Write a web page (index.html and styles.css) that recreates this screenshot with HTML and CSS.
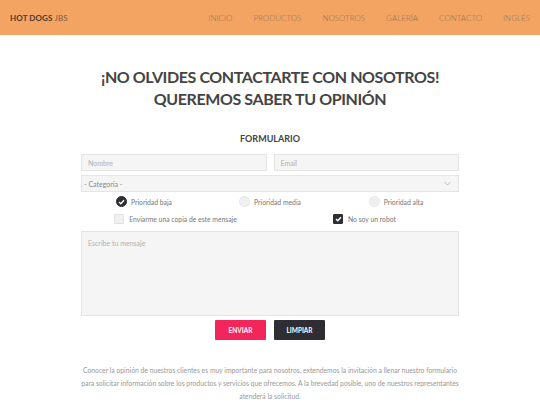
FILE: index.html
```html
<!DOCTYPE html>
<html lang="es">
<head>
<meta charset="utf-8">
<link rel="stylesheet" href="styles.css">
</head>
<body>
<header class="topbar">
  <div class="brand"><b>HOT DOGS</b> JBS</div>
  <nav class="nav">
    <a>INICIO</a><a>PRODUCTOS</a><a>NOSOTROS</a><a>GALERÍA</a><a>CONTACTO</a><a>INGLÉS</a>
  </nav>
</header>
<main class="main">
  <h1 class="title">¡NO OLVIDES CONTACTARTE CON NOSOTROS!<br>QUEREMOS SABER TU OPINIÓN</h1>
  <h2 class="subtitle">FORMULARIO</h2>
  <form class="form">
    <div class="row2">
      <div class="field">Nombre</div>
      <div class="field">Email</div>
    </div>
    <div class="field select">- Categoría -
      <svg class="chev" width="7" height="5" viewBox="0 0 7 5"><path d="M0.5 1 L3.5 4 L6.5 1" fill="none" stroke="#aaa" stroke-width="0.8"/></svg>
    </div>
    <div class="radios">
      <div class="opt"><span class="radio on"><svg width="7" height="6" viewBox="0 0 7 6"><path d="M1 3 L2.8 4.8 L6 1.2" fill="none" stroke="#fff" stroke-width="1.4"/></svg></span>Prioridad baja</div>
      <div class="opt"><span class="radio"></span>Prioridad media</div>
      <div class="opt"><span class="radio"></span>Prioridad alta</div>
    </div>
    <div class="checks">
      <div class="opt"><span class="check"></span>Enviarme una copia de este mensaje</div>
      <div class="opt"><span class="check on"><svg width="7" height="6" viewBox="0 0 7 6"><path d="M1 3 L2.8 4.8 L6 1.2" fill="none" stroke="#fff" stroke-width="1.4"/></svg></span>No soy un robot</div>
    </div>
    <div class="field area">Escribe tu mensaje</div>
    <div class="buttons">
      <span class="btn send">ENVIAR</span>
      <span class="btn clear">LIMPIAR</span>
    </div>
  </form>
  <p class="note">Conocer la opinión de nuestros clientes es muy importante para nosotros, extendemos la invitación a llenar nuestro formulario<br>para solicitar información sobre los productos y servicios que ofrecemos. A la brevedad posible, uno de nuestros representantes<br>atenderá la solicitud.</p>
</main>
</body>
</html>
```
FILE: styles.css
```css
* { box-sizing: border-box; }
body {
  margin: 0;
  font-family: "Lato", "Open Sans", sans-serif;
  color: #555;
  background: #fff;
}
.topbar {
  height: 35px;
  background: #f4a462;
  display: flex;
  align-items: center;
  justify-content: space-between;
  padding: 0 10px 0 10px;
}
.brand {
  font-size: 8px;
  color: #7a5a40;
  letter-spacing: 0.1px;
}
.brand b { color: #4a3a2e; font-weight: 700; }
.nav {
  display: flex;
  gap: 21px;
  font-size: 8px;
  font-weight: 300;
  color: #8f7056;
}
.main {
  width: 378px;
  margin: 0 auto;
  padding-top: 31px;
}
.title {
  margin: 0 -40px;
  text-align: center;
  white-space: nowrap;
  font-size: 16px;
  letter-spacing: -0.4px;
  line-height: 22px;
  font-weight: 700;
  color: #444;
}
.subtitle {
  margin: 23px 0 0;
  text-align: center;
  font-size: 9px;
  font-weight: 700;
  color: #444;
}
.form {
  margin-top: 10px;
  display: flex;
  flex-direction: column;
}
.row2 {
  display: grid;
  grid-template-columns: 1fr 1fr;
  gap: 7px;
}
.field {
  height: 17px;
  background: #f5f5f5;
  border: 1px solid #e4e4e4;
  font-size: 7px;
  color: #b0b0b0;
  display: flex;
  align-items: center;
  padding: 0 6px;
}
.select {
  margin-top: 4px;
  justify-content: space-between;
  color: #888;
  font-size: 7px;
  padding: 0 7px 0 2px;
}
.radios {
  display: grid;
  grid-template-columns: 1fr 1fr 1fr;
  height: 19px;
  align-items: center;
}
.checks {
  display: grid;
  grid-template-columns: 1fr 1fr;
  height: 16px;
  align-items: center;
}
.opt {
  display: flex;
  align-items: center;
  justify-content: center;
  font-size: 6.8px;
  color: #777;
}
.radio {
  width: 11px;
  height: 11px;
  border-radius: 50%;
  background: #f0f0f0;
  border: 1px solid #e6e6e6;
  margin-right: 4px;
  display: flex;
  align-items: center;
  justify-content: center;
}
.radio.on { background: #2d2d33; border-color: #2d2d33; }
.check {
  width: 10px;
  height: 10px;
  background: #f0f0f0;
  border: 1px solid #e2e2e2;
  border-radius: 1px;
  margin-right: 5px;
  display: flex;
  align-items: center;
  justify-content: center;
}
.check.on { background: #2d2d33; border-color: #2d2d33; }
.area {
  margin-top: 4px;
  height: 85px;
  align-items: flex-start;
  padding-top: 7px;
}
.buttons {
  display: flex;
  justify-content: center;
  gap: 8px;
  margin-top: 4px;
}
.btn {
  width: 51px;
  height: 20px;
  display: flex;
  align-items: center;
  justify-content: center;
  font-size: 6.5px;
  font-weight: 700;
  color: #fff;
  border-radius: 1px;
}
.send { background: #f2265a; }
.clear { background: #2d2d33; }
.note {
  margin: 24px -20px 0;
  text-align: center;
  font-size: 6.8px;
  line-height: 13px;
  color: #999;
}
```
